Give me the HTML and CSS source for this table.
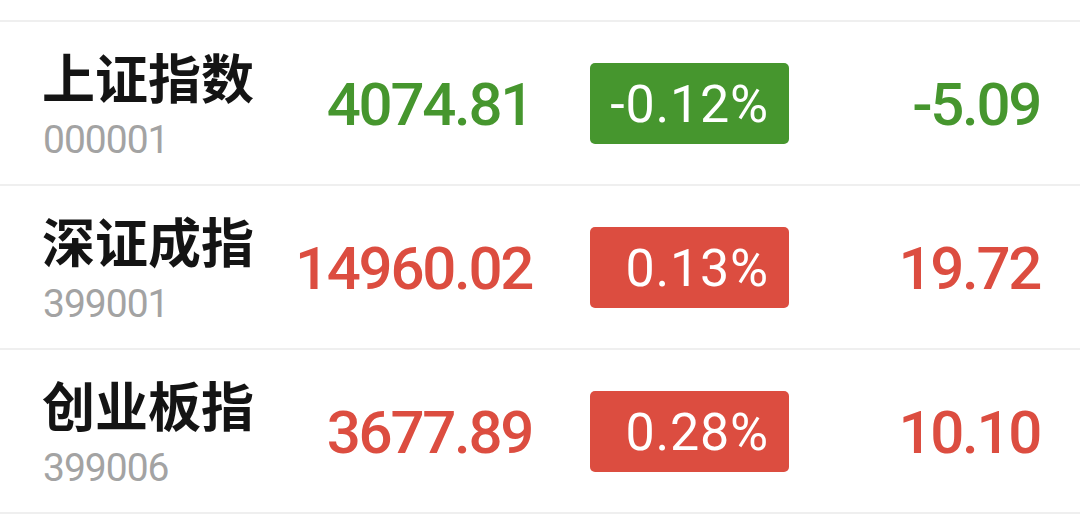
FILE: index.html
```html
<!DOCTYPE html>
<html lang="zh-CN">
<head>
<meta charset="utf-8">
<title>指数行情</title>
<link rel="stylesheet" href="styles.css">
</head>
<body>
<main class="list">
  <div class="row down">
    <div class="name-col">
      <div class="name">上证指数</div>
      <div class="code">000001</div>
    </div>
    <div class="price">4074.81</div>
    <div class="badge-col"><span class="badge">-0.12%</span></div>
    <div class="change">-5.09</div>
  </div>
  <div class="row up">
    <div class="name-col">
      <div class="name">深证成指</div>
      <div class="code">399001</div>
    </div>
    <div class="price">14960.02</div>
    <div class="badge-col"><span class="badge">0.13%</span></div>
    <div class="change">19.72</div>
  </div>
  <div class="row up">
    <div class="name-col">
      <div class="name">创业板指</div>
      <div class="code">399006</div>
    </div>
    <div class="price">3677.89</div>
    <div class="badge-col"><span class="badge">0.28%</span></div>
    <div class="change">10.10</div>
  </div>
</main>
</body>
</html>
```

FILE: styles.css
```css
html, body {
  margin: 0;
  padding: 0;
  background: #ffffff;
}

body {
  width: 1080px;
  height: 523px;
  overflow: hidden;
  font-family: Roboto, "Noto Sans CJK SC", sans-serif;
}

.list {
  padding-top: 20px;
}

.row {
  display: grid;
  grid-template-columns: 248px 242px 257px 1fr;
  align-items: center;
  height: 162px;
  padding: 0 40px 0 42px;
  border-top: 2px solid #efefef;
}

.row:last-child {
  border-bottom: 2px solid #efefef;
}

.name-col {
  display: flex;
  flex-direction: column;
  gap: 3px;
  padding-bottom: 6px;
}

.name {
  font-family: "Noto Sans CJK SC", sans-serif;
  font-weight: 700;
  font-size: 53px;
  line-height: normal;
  color: #141414;
}

.code {
  font-family: Roboto, sans-serif;
  font-size: 39px;
  line-height: normal;
  color: #a3a3a3;
  letter-spacing: -1px;
  margin-left: 1px;
}

.price,
.change {
  font-family: Roboto, sans-serif;
  font-weight: 500;
  font-size: 60px;
  letter-spacing: -2.3px;
  text-align: right;
  line-height: 70px;
  padding-top: 4px;
}

.badge-col {
  display: flex;
  justify-content: flex-end;
}

.badge {
  width: 199px;
  height: 81px;
  box-sizing: border-box;
  border-radius: 5px;
  color: #ffffff;
  font-family: Roboto, sans-serif;
  font-size: 52px;
  letter-spacing: 0.8px;
  display: flex;
  align-items: center;
  justify-content: flex-end;
  padding-right: 20px;
  padding-top: 2px;
}

.down .price,
.down .change {
  color: #46962e;
}

.down .badge {
  background: #46962e;
}

.up .price,
.up .change {
  color: #dc4d40;
}

.up .badge {
  background: #dc4d40;
}
```
